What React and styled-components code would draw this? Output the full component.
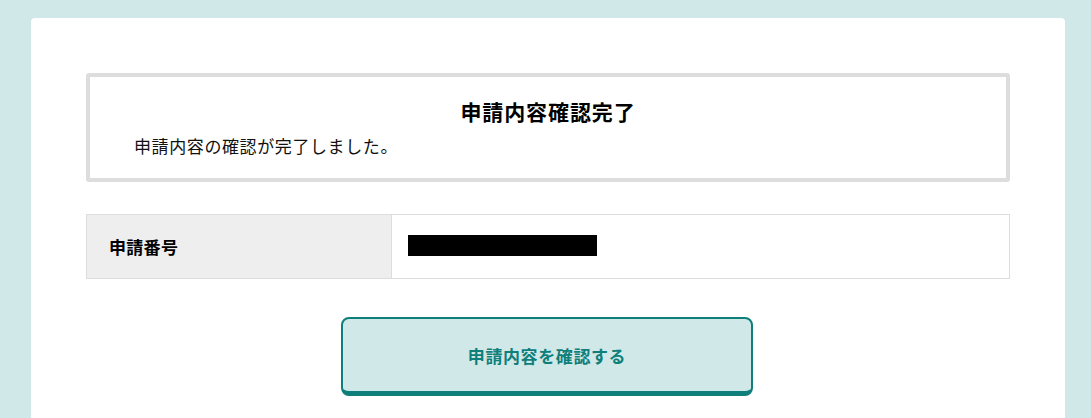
import React from "react";
import styled, { createGlobalStyle } from "styled-components";

const GlobalStyle = createGlobalStyle`
  html, body {
    margin: 0;
    padding: 0;
    background: #d1e8e9;
    font-family: "Noto Sans CJK JP", "Noto Sans", sans-serif;
    color: #111;
  }
  * { box-sizing: border-box; }
`;

const Page = styled.div`
  padding: 18px 26px 0 31px;
  min-height: 418px;
`;

const Card = styled.main`
  background: #fff;
  border-radius: 4px 4px 0 0;
  padding: 55px 55px 40px;
  min-height: 400px;
`;

const NoticeBox = styled.section`
  border: 4px solid #dddddd;
  border-radius: 3px;
  padding: 19px 44px 18px;
`;

const Title = styled.h1`
  margin: 0;
  text-align: center;
  font-size: 21px;
  line-height: 30px;
  font-weight: 700;
  letter-spacing: 0.9px;
  color: #000;
`;

const Message = styled.p`
  margin: 6px 0 0;
  font-size: 17px;
  line-height: 28px;
  letter-spacing: 0.6px;
  color: #111;
`;

const InfoTable = styled.table`
  margin-top: 32px;
  width: 100%;
  border-collapse: collapse;
`;

const HeadCell = styled.th`
  width: 305px;
  height: 64px;
  background: #eeeeee;
  border: 1px solid #dddddd;
  text-align: left;
  padding: 0 22px;
  font-size: 17px;
  font-weight: 700;
  letter-spacing: 0.3px;
  color: #000;
`;

const ValueCell = styled.td`
  border: 1px solid #dddddd;
  padding: 0 16px;
  vertical-align: middle;
`;

const Redacted = styled.span`
  display: block;
  width: 189px;
  height: 21px;
  background: #000;
  margin-top: -2px;
`;

const Actions = styled.div`
  display: flex;
  justify-content: center;
  margin-top: 38px;
  padding-right: 2px;
`;

const ConfirmButton = styled.button`
  width: 412px;
  height: 79px;
  background: #d1e8e9;
  border: 2px solid #0e7f7a;
  border-bottom-width: 5px;
  border-radius: 8px;
  font-family: inherit;
  font-size: 17px;
  font-weight: 700;
  letter-spacing: 0.6px;
  color: #0e7f7a;
  cursor: pointer;
  padding: 0;
`;

export default function App() {
  return (
    <>
      <GlobalStyle />
      <Page>
        <Card>
          <NoticeBox>
            <Title>申請内容確認完了</Title>
            <Message>申請内容の確認が完了しました。</Message>
          </NoticeBox>
          <InfoTable>
            <tbody>
              <tr>
                <HeadCell>申請番号</HeadCell>
                <ValueCell>
                  <Redacted />
                </ValueCell>
              </tr>
            </tbody>
          </InfoTable>
          <Actions>
            <ConfirmButton type="button">申請内容を確認する</ConfirmButton>
          </Actions>
        </Card>
      </Page>
    </>
  );
}
